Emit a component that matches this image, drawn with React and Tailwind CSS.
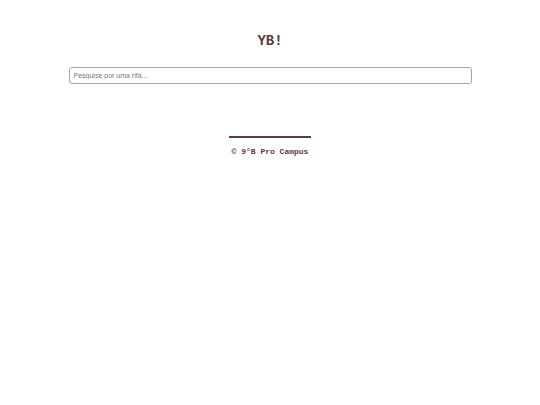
import React from 'react';

export default function App() {
  return (
    <div className="min-h-[405px] bg-white flex flex-col items-center text-[#5b3b3b]">
      <h1
        className="mt-[33px] text-[14px] leading-[16px] font-bold"
        style={{ fontFamily: '"Liberation Mono", monospace' }}
      >
        YB!
      </h1>
      <input
        type="text"
        placeholder="Pesquise por uma rifa..."
        className="mt-[18px] w-[403px] h-[17px] px-[4px] rounded-[3px] border border-[#a9a3a3] text-[7px] text-gray-700 placeholder:text-[#757575] outline-none"
        style={{ fontFamily: '"Liberation Sans", Arial, sans-serif' }}
      />
      <footer className="mt-[52px] flex flex-col items-center">
        <div className="w-[82px] h-[2px] bg-[#5b3b3b]" />
        <p
          className="mt-[9px] text-[8px] leading-[10px] font-bold"
          style={{ fontFamily: '"Liberation Mono", monospace' }}
        >
          © 9°B Pro Campus
        </p>
      </footer>
    </div>
  );
}
